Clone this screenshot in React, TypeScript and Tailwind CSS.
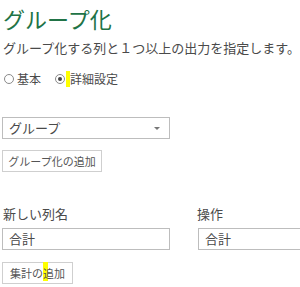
const jp = { fontFamily: '"Noto Sans CJK JP", "Noto Sans", sans-serif' };

function Radio({ checked }: { checked?: boolean }) {
  return (
    <span className="flex h-[10px] w-[10px] items-center justify-center rounded-full border border-[#8a8a8a] bg-white">
      {checked && <span className="h-[4px] w-[4px] rounded-full bg-[#444]" />}
    </span>
  );
}

export default function App() {
  return (
    <div className="h-[287px] w-[300px] overflow-hidden bg-white text-[#4a4a4a]" style={jp}>
      <div className="px-[2px]">
        <h1 className="pl-[1px] pt-[3px] text-[22px] leading-[30px] font-normal text-[#217346]">グループ化</h1>
        <p className="mt-[6px] pl-[1px] text-[13px] leading-[18px] whitespace-nowrap">
          グループ化する列と１つ以上の出力を指定します。
        </p>
        <div className="mt-[14px] flex items-center pl-[2px] text-[12px] leading-[16px]">
          <label className="flex items-center gap-[3px]">
            <Radio />
            <span>基本</span>
          </label>
          <label className="ml-[14px] flex items-center">
            <Radio checked />
            <span className="ml-[1px] h-[16px] w-[4px] bg-[#ffff00]" />
            <span>詳細設定</span>
          </label>
        </div>

        <div className="mt-[30px] flex h-[22px] w-[168px] items-center justify-between border border-[#bdbdbd] bg-white pl-[6px] pr-[9px] text-[13px]">
          <span>グループ</span>
          <span className="h-0 w-0 border-x-[3px] border-t-[3px] border-x-transparent border-t-[#777]" />
        </div>

        <button className="mt-[11px] flex h-[22px] w-[100px] items-center justify-center border border-[#cfcfcf] bg-white text-[11px] text-[#555]">
          グループ化の追加
        </button>

        <div className="mt-[33px] flex text-[13px] leading-[18px]">
          <div className="w-[195px] shrink-0 pl-[1px]">新しい列名</div>
          <div>操作</div>
        </div>

        <div className="mt-[5px] flex">
          <div className="flex h-[22px] w-[168px] shrink-0 items-center border border-[#bdbdbd] pl-[6px] text-[13px]">合計</div>
          <div className="ml-[28px] flex h-[22px] w-[120px] shrink-0 items-center border border-[#bdbdbd] pl-[6px] text-[13px]">合計</div>
        </div>

        <button className="mt-[12px] flex h-[22px] w-[71px] items-center justify-center border border-[#cfcfcf] bg-white text-[11px] text-[#555]">
          <span>集計の</span>
          <span className="relative">
            <span className="absolute -top-[3px] left-0 h-[19px] w-[5px] bg-[#ffff00]" />
            <span className="relative">追</span>
          </span>
          <span>加</span>
        </button>
      </div>
    </div>
  );
}
